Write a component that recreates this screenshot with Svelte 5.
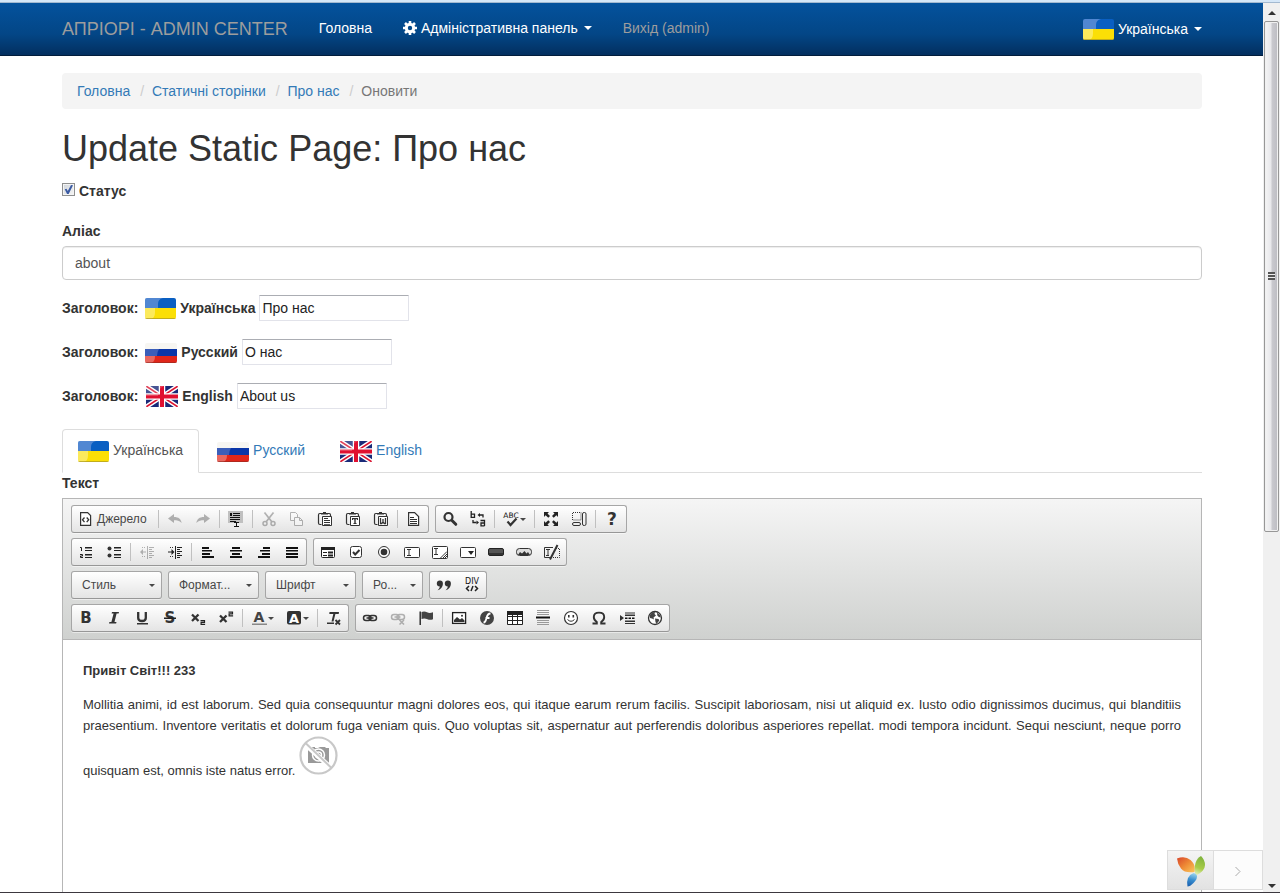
<script>
  const crumbs = ['Головна', 'Статичні сторінки', 'Про нас'];

  const titles = $state([
    { code: 'ua', name: 'Українська', value: 'Про нас' },
    { code: 'ru', name: 'Русский', value: 'О нас' },
    { code: 'en', name: 'English', value: 'About us' }
  ]);

  let active = $state('ua');
  let status = $state(true);
  let alias = $state('about');

  const sans = 'font-family="DejaVu Sans, sans-serif"';
  const line = 'fill="none" stroke="#333"';

  const pasteBase = `<path ${line} stroke-width="1.2" d="M4 2.5H2.8Q1.5 2.5 1.5 4v8q0 1.5 1.5 1.5h1.5M11 2.5h1.200Q13.500 2.500 13.500 4v1"/><path d="M4 3.500V2h2V1h3v1h2v1.500z" fill="#333"/><path d="M5.500 5.500h9v9h-9z" fill="#fff" stroke="#333"/>`;

  const icons = {
    source: `<path fill="#fff" stroke="#333" stroke-width="1.200" d="M2.600 1.600h7l3 3v9.800h-10z"/><path ${line} stroke-width="1.300" d="M6.500 6.500l-2 2.300 2 2.300M8.700 6.500l2 2.300-2 2.300"/>`,
    undo: `<path fill="#333" d="M1 7.500L7 3v3c4.500 0 7 2 7.600 6C12.500 9.800 10 9.300 7 9.300V12z"/>`,
    redo: `<path fill="#333" d="M15 7.500L9 3v3C4.500 6 2 8 1.400 12 3.500 9.800 6 9.300 9 9.300V12z"/>`,
    selectall: `<path fill="#c0c0c0" d="M0 0h15v12H0z"/><path fill="#111" d="M2 2h2v3H2zM5 2h7v1H5zM5 4h7v1H5zM2 6h10v1H2zM2 8h10v1H2zM2 10h6v1H2zM6 11h5v1H9v3h2v1H6v-1h2v-3H6z"/>`,
    cut: `<g fill="none" stroke="#333"><circle cx="4" cy="12.500" r="2" stroke-width="1.500"/><circle cx="12" cy="12.500" r="2" stroke-width="1.500"/><path stroke-width="1.700" d="M3.500 1.500L11 11M12.500 1.500L5 11"/></g>`,
    copy: `<path fill="#fff" stroke="#333" d="M1.500 1.500h5l2 2v6h-7z"/><path fill="#fff" stroke="#333" d="M5.500 6.500h5l3 3v5h-8z"/><path ${line} d="M10.500 6.500v3h3"/>`,
    paste: pasteBase + `<path fill="#333" d="M7 7h4v1H7zM7 9h6v1H7zM7 11h6v1H7zM7 13h6v.800H7z"/>`,
    pastetext: pasteBase + `<path fill="#333" d="M7 7h6v2h-1V8.300h-1.300V12h.800v1h-3v-1h.800V8.300H8V9H7z"/>`,
    pasteword: pasteBase + `<path fill="none" stroke="#333" stroke-width="1.300" d="M7.500 7v5.500h1.200L10 11l1.300 1.500h1.200V7M10 8v3"/>`,
    template: `<path fill="#fff" stroke="#333" stroke-width="1.200" d="M2.600 1.600h6l4 4v8.800h-10z"/><path fill="#333" d="M4 6h4v1H4zM4 8h7v1H4zM4 10h7v1H4zM4 12h7v1H4z"/>`,
    find: `<circle cx="6.500" cy="6" r="4" ${line} stroke-width="2.200"/><path ${line} stroke-width="3" stroke-linecap="round" d="M10 9.500l3.800 3.800"/>`,
    replace: `<g fill="none" stroke="#222" stroke-width="1.300"><path d="M1.200 0v6.400h3.300V3.200H1.200"/><path d="M10.500 9.500h4v5.500M14.500 12H11v2.800h3.500"/><path d="M9.500 4H13v2.500M3 9v2.500h3.500"/></g><path fill="#222" d="M10 2v4L7.500 4zM6.500 9.500v4L9 11.500z"/>`,
    spell: `<text x="8" y="7" text-anchor="middle" font-size="7.500" ${sans} fill="#111">ABC</text><path ${line} stroke-width="2.200" d="M4.500 10.500l3 3.500 6-6.500"/>`,
    maximize: `<path fill="#222" d="M1 1h5L4.500 2.500 7 5 5.300 6.700 2.600 4.300 1 6zM15 1v5l-1.600-1.700-2.700 2.400L9 5l2.500-2.500L10 1zM1 15v-5l1.600 1.700 2.700-2.400L7 11l-2.500 2.500L6 15zM15 15h-5l1.500-1.500L9 11l1.700-1.700 2.700 2.400L15 10z"/>`,
    blocks: `<path ${line} stroke-dasharray="1 1" d="M1.500 9V1.500H10V9z"/><rect x="1.500" y="11.500" width="8" height="3" rx="1.500" ${line}/><rect x="11.500" y="1.500" width="3.500" height="13" rx="1.500" ${line}/>`,
    about: `<text x="8" y="14" text-anchor="middle" font-size="17" font-weight="bold" ${sans} fill="#333">?</text>`,
    ol: `<path fill="#222" d="M7 3h7v1.400H7zM7 6h7v1H7zM7 10h7v1.400H7zM7 13h7v1H7z"/><path fill="none" stroke="#222" d="M2 3.500h1.500V7M2 10.500h2.500v1.500H2.500v1.500h2.500"/>`,
    ul: `<circle cx="3.500" cy="4.500" r="2" fill="#333"/><circle cx="3.500" cy="11.500" r="2" fill="#333"/><path fill="#222" d="M8 3h7v1.400H8zM8 6h7v1H8zM8 10h7v1.400H8zM8 13h7v1H8z"/>`,
    outdent: `<path fill="#333" d="M8 2h1v13H8zM10 3h5v1h-5zM10 5h3v1h-3zM10 7h5v1h-5zM10 9h3v1h-3zM10 11h5v1h-5zM10 13h3v1h-3zM1 8l3-3v2.500h3v1H4V11z"/><path ${line} stroke-dasharray="1 1" d="M3 3.500h4M3 12.500h4"/>`,
    indent: `<path fill="#222" d="M8 2h1v13H8zM10 3h5v1h-5zM10 5h3v1h-3zM10 7h5v1h-5zM10 9h3v1h-3zM10 11h5v1h-5zM10 13h3v1h-3zM7.500 8l-3-3v2.500H1v1h3.500V11z"/><path ${line} stroke-dasharray="1 1" d="M3 3.500h4M3 12.500h4"/>`,
    left: `<path fill="#111" d="M2 3h7v2H2zM2 6h10v1.500H2zM2 9h8v2H2zM2 12h12v2H2z"/>`,
    center: `<path fill="#111" d="M4 3h8v2H4zM2 6h12v1.500H2zM4 9h8v2H4zM2 12h12v2H2z"/>`,
    right: `<path fill="#111" d="M7 3h7v2H7zM4 6h10v1.500H4zM6 9h8v2H6zM2 12h12v2H2z"/>`,
    justify: `<path fill="#111" d="M2 3h12v2H2zM2 6h12v1.500H2zM2 9h12v2H2zM2 12h12v2H2z"/>`,
    form: `<rect x="1.500" y="3.500" width="13" height="10" rx="1" fill="#fff" stroke="#222"/><path fill="#222" d="M1 3h14v3H1zM3 8h4v1H3zM3 11h4v1H3zM8 7.500h5v2H8zM8 10.500h5v2H8z"/>`,
    checkbox: `<rect x="2.500" y="2.500" width="11" height="11" rx="2" fill="#fff" stroke="#333"/><path ${line} stroke-width="2" d="M5 8l2.200 2.500L11.500 6"/>`,
    radio: `<circle cx="8" cy="8" r="5.500" fill="#fff" stroke="#333"/><circle cx="8" cy="8" r="3.300" fill="#333"/>`,
    textfield: `<rect x=".500" y="3.500" width="15" height="10" rx="1" fill="#fff" stroke="#333"/><path ${line} d="M3 5.500h4M3 11.500h4M5 5.500v6"/>`,
    textarea: `<rect x=".500" y="2.500" width="15" height="12" rx="1" fill="#fff" stroke="#333"/><path ${line} d="M2 4.500h4M2 10.500h4M4 4.500v6M8.500 14L15 7.500M11 14l4-4M13 14l2-2"/>`,
    select: `<rect x=".500" y="3.500" width="15" height="10" rx="1" fill="#fff" stroke="#333"/><path fill="#222" d="M8 7h6l-3 4z"/>`,
    button: `<rect x=".500" y="4.500" width="15" height="7" rx="1.500" fill="#555" stroke="#222"/><path stroke="#333" stroke-width="2" d="M1 10h14"/>`,
    imgbutton: `<rect x=".500" y="4.500" width="15" height="7" rx="3" fill="#ddd" stroke="#333"/><path fill="#333" d="M2 11l2-3 2 1.500L8.500 7l2 2.500L12 8l2 3z"/>`,
    hidden: `<path ${line} d="M9 3.500H.500v10H6M2 5.500h4M2 11.500h3M4 5.500v6"/><path ${line} stroke-dasharray="1 1" d="M12 4.500h3.500v9H9"/><path ${line} stroke-width="2" d="M13.500 1L6 15.500"/>`,
    quote: `<path fill="#333" d="M3.800 3.500a3 3 0 0 1 3.100 3C6.900 10 4.500 12.800 1.500 13.300c1.300-1.100 2.200-2.200 2.300-3.800a3 3 0 0 1 0-6zM11.800 3.500a3 3 0 0 1 3.100 3c0 3.500-2.400 6.300-5.400 6.800 1.300-1.100 2.200-2.200 2.300-3.800a3 3 0 0 1 0-6z"/>`,
    div: `<text x="8" y="7" text-anchor="middle" font-size="8" ${sans} fill="#111">DIV</text><path fill="none" stroke="#222" stroke-width="1.500" d="M5 9l-2.500 2.500L5 14M11 9l2.500 2.500L11 14M9 9l-2 5"/>`,
    bold: `<text x="8" y="13" text-anchor="middle" font-size="15" font-weight="bold" ${sans} fill="#333">B</text>`,
    italic: `<path fill="#333" d="M6 2h7l-.400 1.500h-2L8.500 12h2l-.400 1.500H3L3.400 12h2l2.200-8.500h-2z"/>`,
    underline: `<path ${line} stroke-width="2.300" d="M4.200 2v6q0 3 3.800 3t3.800-3V2"/><path fill="#333" d="M3 13h11v1.500H3z"/>`,
    strike: `<text x="8" y="13" text-anchor="middle" font-size="15" font-weight="bold" ${sans} fill="#333">S</text><path fill="#222" d="M2 7.500h12V9H2z"/>`,
    sub: `<path ${line} stroke-width="2.300" d="M2 4.500l6.500 6.500M8.500 4.500L2 11"/><path fill="none" stroke="#222" stroke-width="1.200" d="M10.500 10.600h4v1.800h-3.400v2h4"/>`,
    sup: `<path ${line} stroke-width="2.300" d="M2 5.500L8.500 12M8.500 5.500L2 12"/><path fill="none" stroke="#222" stroke-width="1.200" d="M10.500 2.100h4v1.800h-3.400v2h4"/>`,
    color: `<text x="8" y="12" text-anchor="middle" font-size="14" font-weight="bold" ${sans} fill="#444">A</text><path fill="#888" d="M1 13.500h15V15H1z"/>`,
    bgcolor: `<rect x="1" y="1" width="14" height="13.500" rx="2" fill="#333"/><text x="8" y="12.500" text-anchor="middle" font-size="13" font-weight="bold" ${sans} fill="#fff">A</text>`,
    clear: `<path fill="#333" d="M3.500 2h9.500l-.300 2H9.400L7.500 11.500h-2L7.300 4h-4zM1 12.500h7V14H1z"/><path ${line} stroke-width="1.800" d="M9.500 10l4.500 4.500M14 10l-4.500 4.500"/>`,
    link: `<g ${line} stroke-width="1.500"><rect x="1.500" y="5.500" width="7.500" height="5" rx="2.500"/><rect x="7" y="5.500" width="7.500" height="5" rx="2.500"/><path d="M4.500 8h7"/></g>`,
    unlink: `<g ${line} stroke-width="1.500"><rect x="1.500" y="4.500" width="7.500" height="5" rx="2.500"/><rect x="7" y="4.500" width="7.500" height="5" rx="2.500"/><path d="M4.500 7h6M9.500 10l4.500 4.500M14 10l-4.500 4.500"/></g>`,
    anchor: `<path fill="#222" d="M1.500 1.500h1.400V15H1.500z"/><path fill="#444" d="M3.500 2q3-1.200 5.500.300 2.500 1.200 6 0v7q-3 1-5.500 0-3-1.500-6-.300z"/>`,
    image: `<rect x="1.600" y="2.600" width="13" height="10.800" fill="#fff" stroke="#222" stroke-width="1.300"/><path fill="#333" d="M3 12v-2l3-3 3 2.500L11 8l2.500 2.500V12z"/><circle cx="11" cy="5.800" r="1" fill="#333"/>`,
    flash: `<circle cx="8" cy="8" r="7" fill="#444"/><path fill="none" stroke="#fff" stroke-width="1.800" d="M11.500 3.500Q8.500 3.500 7.500 8T4.500 12.500M6.500 8h4"/>`,
    table: `<path fill="#fff" stroke="#222" d="M.500 2.500h15v12H.500zM.500 6.500h15M.500 10.500h15M5.500 5v9.500M10.500 5v9.500"/><path fill="#222" d="M0 1h16v4H0z"/>`,
    rule: `<path fill="#999" d="M2 0h12v1H2zM2 2h12v1H2zM2 4h12v1H2zM2 10h12v1H2zM2 12h12v1H2zM2 14h12v1H2z"/><path fill="#111" d="M1 6.500h14v2H1z"/>`,
    smile: `<circle cx="8" cy="8" r="6.500" fill="#fff" stroke="#333" stroke-width="1.200"/><path fill="#333" d="M5 5h1.600v2.500H5zM9.500 5h1.600v2.500H9.500z"/><path ${line} d="M4.500 9.500q3.500 3.500 7 0"/>`,
    omega: `<path ${line} stroke-width="1.900" d="M1.500 13.500h4.300v-1.500Q2.800 10 2.800 7q0-4.400 5.200-4.400T13.200 7q0 3-3 5v1.500h4.300"/>`,
    pagebreak: `<path fill="#333" d="M1 5l4 3-4 3zM6 2.500h10v1H6zM6 4.500h10V6H6zM6 10.500h10V12H6zM6 13h10v1H6z"/><path stroke="#111" stroke-width="1.500" stroke-dasharray="2.500 1" d="M6 8.200h10"/>`,
    iframe: `<circle cx="8" cy="8" r="6.500" fill="#fff" stroke="#333" stroke-width="1.300"/><path fill="#444" d="M2.500 5.500L5 2.500l3-.500-.500 2L9 5.500 6.500 7.500l.500 2L5 8.500 3 8zM10 2.500l3 2.500.800 2.500-2-.500-1.500-1.500zM8 8.500l3.500.500.800 1.500-2.800 3.500-1-2z"/>`
  };

  const row1 = [
    ['source', '|', 'undo*', 'redo*', '|', 'selectall', '|', 'cut*', 'copy*', 'paste', 'pastetext', 'pasteword', '|', 'template'],
    ['find', 'replace', '|', 'spell+', '|', 'maximize', 'blocks', '|', 'about']
  ];
  const row2 = [
    ['ol', 'ul', '|', 'outdent*', 'indent', '|', 'left', 'center', 'right', 'justify'],
    ['form', 'checkbox', 'radio', 'textfield', 'textarea', 'select', 'button', 'imgbutton', 'hidden']
  ];
  const row4 = [
    ['bold', 'italic', 'underline', 'strike', 'sub', 'sup', '|', 'color+', 'bgcolor+', '|', 'clear'],
    ['link', 'unlink*', 'anchor', '|', 'image', 'flash', 'table', 'rule', 'smile', 'omega', 'pagebreak', 'iframe']
  ];
  const combos = ['Стиль', 'Формат...', 'Шрифт'];
</script>

{#snippet flag(code)}
  {#if code === 'ua'}
    <svg class="flag" width="31" height="22" viewBox="0 -1 31 22" aria-hidden="true">
      <clipPath id="ua"><rect y="0" width="31" height="21" rx="2" /></clipPath>
      <g clip-path="url(#ua)">
        <rect width="31" height="11" fill="#0a5fc2" />
        <rect y="10" width="31" height="11" fill="#fbdf06" />
        <path d="M0 0h18q-5 1-5 6v4H0z" fill="#d8d4f0" opacity=".35" />
        <path d="M0 10h10v4q0 6-4 7H0z" fill="#fff" opacity=".35" />
        <path d="M0 20h31v1H0z" fill="#a99724" opacity=".7" />
      </g>
    </svg>
  {:else if code === 'ru'}
    <svg class="flag" width="32" height="22" viewBox="0 -1 32 22" aria-hidden="true">
      <clipPath id="ru"><rect y="1" width="32" height="20" rx="2" /></clipPath>
      <g clip-path="url(#ru)">
        <rect y="1" width="32" height="7" fill="#f7f6f2" />
        <rect y="7" width="32" height="8" fill="#0a36a8" />
        <rect y="14" width="32" height="8" fill="#e0261a" />
        <path d="M0 7h14q-2 3-2 7H0z" fill="#fff" opacity=".2" />
        <path d="M0 14h10q0 6-4 7H0z" fill="#fff" opacity=".3" />
        <path d="M0 20h32v1H0z" fill="#8f2a20" opacity=".6" />
      </g>
    </svg>
  {:else}
    <svg class="flag" width="33" height="22" viewBox="0 -1 33 22" aria-hidden="true">
      <clipPath id="en"><rect x="1" width="32" height="21" rx="1" /></clipPath>
      <g clip-path="url(#en)">
        <rect x="1" width="32" height="21" fill="#1a2a78" />
        <path d="M1 0l32 21M33 0L1 21" stroke="#fff" stroke-width="4.500" />
        <path d="M1 0l32 21M33 0L1 21" stroke="#dc1430" stroke-width="1.600" />
        <path d="M17 0v21M1 10.500h32" stroke="#fff" stroke-width="6.500" />
        <path d="M17 0v21M1 10.500h32" stroke="#e01030" stroke-width="4" />
        <path d="M1 0h18q-6 2-6 10H1z" fill="#fff" opacity=".2" />
      </g>
    </svg>
  {/if}
{/snippet}

{#snippet group(items)}
  <div class="group" role="group">
    {#each items as item}
      {@const name = item.replace(/[*+]$/, '')}
      {#if item === '|'}
        <span class="sep"></span>
      {:else}
        <button type="button" class="tool" disabled={item.endsWith('*')} aria-label={name}>
          <svg class="icon" viewBox="0 0 16 16" aria-hidden="true">{@html icons[name]}</svg>
          {#if name === 'source'}<span class="tool-label">Джерело</span>{/if}
          {#if item.endsWith('+')}<span class="tool-arrow"></span>{/if}
        </button>
      {/if}
    {/each}
  </div>
{/snippet}

<div class="frame">
  <div class="page">
    <header class="navbar">
      <nav class="container nav">
        <a class="brand" href="#home">АПРІОРІ - ADMIN CENTER</a>
        <a class="nav-link" href="#main">Головна</a>
        <a class="nav-link" href="#panel">
          <svg width="14" height="14" viewBox="0 0 14 14" aria-hidden="true">
            <circle cx="7" cy="7" r="3.700" fill="none" stroke="#fff" stroke-width="3" />
            <path d="M7 0v2.500M7 11.500V14M0 7h2.500M11.500 7H14M2 2l2 2M10 10l2 2M12 2l-2 2M4 10l-2 2" stroke="#fff" stroke-width="2.600" />
          </svg>
          Адміністративна панель
          <span class="caret"></span>
        </a>
        <a class="nav-link muted" href="#logout">Вихід (admin)</a>
        <a class="nav-link lang" href="#lang">
          {@render flag('ua')}
          Українська
          <span class="caret"></span>
        </a>
      </nav>
    </header>

    <main class="container content">
      <ol class="breadcrumb">
        {#each crumbs as crumb}
          <li><a href="#crumb">{crumb}</a></li>
        {/each}
        <li>Оновити</li>
      </ol>

      <h1>Update Static Page: Про нас</h1>

      <label class="status">
        <input type="checkbox" bind:checked={status} />
        Статус
      </label>

      <label class="field-label" for="alias">Аліас</label>
      <input class="form-control" id="alias" type="text" bind:value={alias} />

      <div class="titles">
        {#each titles as t}
          <div class="title-row">
            <label for={'title-' + t.code}>
              <span class="caption">Заголовок:</span>
              {@render flag(t.code)}
              {t.name}
            </label>
            <input id={'title-' + t.code} type="text" bind:value={t.value} />
          </div>
        {/each}
      </div>

      <div class="tabs" role="tablist">
        {#each titles as t}
          <button
            type="button"
            role="tab"
            class="tab"
            class:active={active === t.code}
            aria-selected={active === t.code}
            onclick={() => (active = t.code)}
          >
            {@render flag(t.code)}
            {t.name}
          </button>
        {/each}
      </div>

      <div class="field-label">Текст</div>

      <section class="editor">
        <div class="toolbar" role="toolbar">
          <div class="tool-row">
            {#each row1 as items}{@render group(items)}{/each}
          </div>
          <div class="tool-row">
            {#each row2 as items}{@render group(items)}{/each}
          </div>
          <div class="tool-row">
            {#each combos as combo}
              <div class="combo">
                <select aria-label={combo}><option>{combo}</option></select>
                <span class="tool-arrow"></span>
              </div>
            {/each}
            <div class="combo small">
              <select aria-label="Розмір"><option>Ро...</option></select>
              <span class="tool-arrow"></span>
            </div>
            {@render group(['quote', 'div'])}
          </div>
          <div class="tool-row">
            {#each row4 as items}{@render group(items)}{/each}
          </div>
        </div>
        <div class="document">
          <p><strong>Привіт Світ!!! 233</strong></p>
          <p>
            Mollitia animi, id est laborum. Sed quia consequuntur magni dolores eos, qui itaque earum rerum facilis.
            Suscipit laboriosam, nisi ut aliquid ex. Iusto odio dignissimos ducimus, qui blanditiis praesentium.
            Inventore veritatis et dolorum fuga veniam quis. Quo voluptas sit, aspernatur aut perferendis doloribus
            asperiores repellat. modi tempora incidunt. Sequi nesciunt, neque porro quisquam est, omnis iste natus error.
            <svg width="39" height="39" viewBox="0 0 39 39" aria-hidden="true">
              <path d="M9 12h4v-1h3v1h3l2-1h5l1 1h3v15H9z" fill="#999" />
              <circle cx="19.500" cy="19" r="6" fill="#999" stroke="#fff" stroke-width="1.500" />
              <circle cx="19.500" cy="19" r="3" fill="none" stroke="#fff" stroke-width="1.500" />
              <path d="M6 8l26 24" stroke="#fff" stroke-width="5" />
              <path d="M6.500 7l26 25" stroke="#c8c8c8" stroke-width="2" />
              <circle cx="19.500" cy="19.500" r="18" fill="none" stroke="#c8c8c8" stroke-width="2.200" />
            </svg>
          </p>
        </div>
      </section>
    </main>

    <div class="debug">
      <a class="debug-logo" href="#debug" aria-label="Yii">
        <svg width="28" height="31" viewBox="0 0 28 31" aria-hidden="true">
          <defs>
            <linearGradient id="yo" x1="0" y1="0" x2="1" y2="1">
              <stop offset="0" stop-color="#d8452a" /><stop offset="0.500" stop-color="#ee8a35" /><stop offset="1" stop-color="#fbc75c" />
            </linearGradient>
            <linearGradient id="yg" x1="0.500" y1="0" x2="0.300" y2="1">
              <stop offset="0" stop-color="#7fb33c" /><stop offset="0.600" stop-color="#a9cc48" /><stop offset="1" stop-color="#e8f2c8" />
            </linearGradient>
            <linearGradient id="yb" x1="0.600" y1="0" x2="0.400" y2="1">
              <stop offset="0" stop-color="#9ad4ee" /><stop offset="0.500" stop-color="#3a8fd0" /><stop offset="1" stop-color="#1b62b0" />
            </linearGradient>
          </defs>
          <path d="M0 2.500Q8-.500 13.500 4t4 12Q8 17.500 4 12.500 .500 8 0 2.500z" fill="url(#yo)" />
          <path d="M24 0q4 4 4 9 0 6-9.500 11Q17 12 18.500 7T24 0z" fill="url(#yg)" />
          <path d="M16.500 17q3.500.500 3.500 3.500 0 3-3.500 6.500T10.500 30.500q-1-5 .500-8.500t5.500-5z" fill="url(#yb)" />
        </svg>
      </a>
      <button type="button" class="debug-toggle" aria-label="Toggle">
        <svg width="6" height="11" viewBox="0 0 6 11" aria-hidden="true">
          <path d="M.500 1l4.500 4.500L.500 10" fill="none" stroke="#aaa" />
        </svg>
      </button>
    </div>
  </div>

  <aside class="scrollbar" aria-hidden="true">
    <span class="scroll-up"></span>
    <div class="track">
      <div class="thumb"><span class="grip"></span></div>
    </div>
    <span class="scroll-down"></span>
  </aside>
</div>

<style>
  :global(body) {
    margin: 0;
    background: #fff;
  }
  .frame,
  .frame :global(*) {
    box-sizing: border-box;
  }
  .frame {
    display: flex;
    height: 100vh;
    overflow: hidden;
    border-top: 2px solid #d5e7f8;
    border-bottom: 1px solid #3c383f;
    background: #fff;
    color: #333;
    font: 14px/20px 'Liberation Sans', Arial, sans-serif;
  }
  .page {
    position: relative;
    flex: 1;
    min-width: 0;
    display: flex;
    flex-direction: column;
    border-top: 1px solid #a3b9d0;
  }
  button,
  input,
  select {
    font: inherit;
    margin: 0;
  }
  a {
    color: #337ab7;
    text-decoration: none;
  }
  .container {
    width: 100%;
    max-width: 1141px;
    margin: 0 auto;
    padding-left: 1px;
  }
  .flag {
    flex: none;
    display: block;
  }

  .navbar {
    background: linear-gradient(#04529d, #034686 60%, #032f5f);
    border-bottom: 1px solid #021d3c;
  }
  .nav {
    display: flex;
    align-items: center;
    height: 52px;
    gap: 31px;
  }
  .brand {
    color: #9d9d9d;
    font-size: 18px;
  }
  .nav-link {
    display: flex;
    align-items: center;
    gap: 4px;
    padding-bottom: 2px;
    color: #fff;
  }
  .nav-link.muted {
    color: #9d9d9d;
  }
  .nav-link.lang {
    margin-left: auto;
    padding-bottom: 0;
  }
  .caret {
    margin-left: 2px;
    border: 4px solid transparent;
    border-top-color: #fff;
    border-bottom: 0;
  }

  .content {
    flex: 1;
    min-height: 0;
    display: flex;
    flex-direction: column;
    padding-top: 17px;
  }
  .breadcrumb {
    display: flex;
    gap: 6px;
    margin: 0;
    padding: 8px 15px;
    background: #f4f4f4;
    border-radius: 4px;
    list-style: none;
    color: #777;
  }
  .breadcrumb li + li::before {
    content: '/\00a0';
    padding: 0 4px;
    color: #ccc;
  }
  h1 {
    margin: 20px 0 12px;
    font-size: 36px;
    line-height: 40px;
    font-weight: 400;
  }
  .status {
    display: flex;
    align-items: center;
    gap: 4px;
    margin-bottom: 20px;
    font-weight: 700;
  }
  .status input {
    appearance: none;
    display: grid;
    place-items: center;
    width: 13px;
    height: 13px;
    margin-bottom: 3px;
    border: 1px solid #8e8f8f;
    background: linear-gradient(135deg, #cfd4da, #f6f6f6);
    box-shadow: inset 0 0 0 1px #f4f4f4;
  }
  .status input:checked::before {
    content: '';
    width: 9px;
    height: 9px;
    background: #3b5ba3;
    clip-path: polygon(8% 48%, 28% 42%, 42% 66%, 78% 0, 100% 4%, 52% 100%, 34% 100%);
  }
  .field-label {
    margin-bottom: 5px;
    font-weight: 700;
  }
  .form-control {
    width: 100%;
    height: 34px;
    padding: 6px 12px;
    border: 1px solid #ccc;
    border-radius: 4px;
    color: #555;
    background: #fff;
    box-shadow: inset 0 1px 1px rgba(0, 0, 0, 0.075);
  }
  .titles {
    display: flex;
    flex-direction: column;
    gap: 18px;
    margin: 15px 0 20px;
  }
  .title-row,
  .title-row label {
    display: flex;
    align-items: center;
    gap: 4px;
    font-weight: 700;
  }
  .caption {
    margin-right: 3px;
  }
  .title-row input {
    width: 150px;
    height: 26px;
    padding: 1px 2px;
    border: 1px solid #e2e3ea;
    border-top-color: #abadb3;
    border-radius: 1px;
    background: #fff;
    color: #222;
    font-weight: 400;
  }

  .tabs {
    display: flex;
    gap: 2px;
    border-bottom: 1px solid #ddd;
  }
  .tab {
    display: flex;
    align-items: flex-start;
    gap: 4px;
    margin-bottom: -1px;
    padding: 10px 15px;
    border: 1px solid transparent;
    border-radius: 4px 4px 0 0;
    background: none;
    color: #337ab7;
  }
  .tab.active {
    border-color: #ddd #ddd #fff;
    background: #fff;
    color: #555;
  }

  .editor {
    flex: 1;
    min-height: 0;
    overflow: hidden;
    border: 1px solid #b6b6b6;
    border-bottom: 0;
  }
  .toolbar {
    display: flex;
    flex-direction: column;
    gap: 5px;
    padding: 6px 8px 7px;
    border-bottom: 1px solid #b6b6b6;
    background: linear-gradient(#f5f5f5, #cfd1cf);
  }
  .tool-row {
    display: flex;
    flex-wrap: wrap;
    gap: 6px;
  }
  .group,
  .combo {
    display: flex;
    align-items: center;
    border: 1px solid #a6a6a6;
    border-bottom-color: #979797;
    border-radius: 3px;
    background: linear-gradient(#fff, #e4e4e4);
    box-shadow: 0 1px 0 rgba(255, 255, 255, 0.5);
  }
  .sep {
    width: 1px;
    height: 18px;
    margin: 0 2px;
    background: #c0c0c0;
  }
  .tool {
    display: flex;
    align-items: center;
    padding: 5px 6px;
    border: 0;
    background: none;
    color: #474747;
    font-size: 12px;
    line-height: 16px;
  }
  .tool:disabled {
    opacity: 0.35;
  }
  .icon {
    flex: none;
    display: block;
    width: 16px;
    height: 16px;
    overflow: visible;
  }
  .tool-label {
    padding: 0 3px;
  }
  .tool-arrow {
    flex: none;
    margin-left: 1px;
    border: 3px solid transparent;
    border-top-color: #474747;
    border-bottom: 0;
  }
  .combo {
    width: 91px;
    padding-right: 6px;
  }
  .combo.small {
    width: 61px;
  }
  .combo select {
    appearance: none;
    flex: 1;
    min-width: 0;
    height: 26px;
    padding: 0 0 0 10px;
    border: 0;
    background: none;
    color: #474747;
    font-size: 12px;
  }

  .document {
    padding: 20px;
    font-size: 13px;
    line-height: 21px;
    text-align: justify;
  }
  .document p {
    margin: 0 0 13px;
  }

  .debug {
    position: absolute;
    right: 0;
    bottom: 2px;
    display: flex;
    height: 40px;
    border: 1px solid #ddd;
    background: #fcfcfc;
  }
  .debug-logo {
    display: flex;
    align-items: center;
    justify-content: center;
    width: 46px;
    padding-top: 3px;
    border-right: 1px solid #ddd;
    background: linear-gradient(#f4f4f4, #e2e2e2);
  }
  .debug-toggle {
    display: flex;
    align-items: center;
    justify-content: center;
    width: 48px;
    padding: 3px 0 0;
    border: 0;
    background: none;
  }

  .scrollbar {
    flex: none;
    display: flex;
    flex-direction: column;
    align-items: center;
    width: 17px;
    padding: 8px 0 4px;
    border-top: 1px solid #a3b9d0;
    background: #f0f0f0;
  }
  .scroll-up,
  .scroll-down {
    border: 4px solid transparent;
  }
  .scroll-up {
    border-bottom-color: #333;
    border-top: 0;
  }
  .scroll-down {
    border-top-color: #333;
    border-bottom: 0;
  }
  .track {
    flex: 1;
    align-self: stretch;
    padding: 6px 1px 12px;
  }
  .thumb {
    display: flex;
    align-items: center;
    justify-content: center;
    height: 60%;
    border: 1px solid #979797;
    border-radius: 2px;
    background: linear-gradient(90deg, #f5f5f5, #e8e8eb 45%, #c9c9ce 55%, #bcbcc2);
    box-shadow: inset 0 0 0 1px #f0f0f0;
  }
  .grip {
    width: 7px;
    height: 8px;
    background: repeating-linear-gradient(#555 0 2px, #eee 2px 3px);
  }
</style>
